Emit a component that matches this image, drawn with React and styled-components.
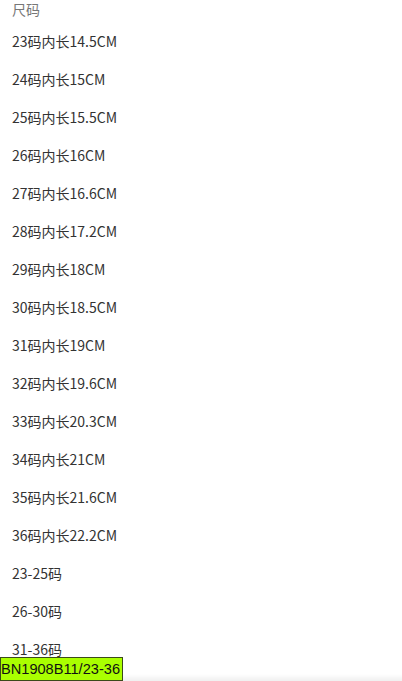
import React from "react";
import styled, { createGlobalStyle } from "styled-components";

const SIZES = [
  "23码内长14.5CM",
  "24码内长15CM",
  "25码内长15.5CM",
  "26码内长16CM",
  "27码内长16.6CM",
  "28码内长17.2CM",
  "29码内长18CM",
  "30码内长18.5CM",
  "31码内长19CM",
  "32码内长19.6CM",
  "33码内长20.3CM",
  "34码内长21CM",
  "35码内长21.6CM",
  "36码内长22.2CM",
  "23-25码",
  "26-30码",
  "31-36码"
];

const GlobalStyle = createGlobalStyle`
  html, body {
    margin: 0;
    padding: 0;
    background: #fff;
    height: 100%;
    overflow: hidden;
  }
  body {
    font-family: "Noto Sans CJK SC", "Noto Sans", sans-serif;
  }
`;

const Page = styled.div`
  padding: 0 12px;
`;

const Title = styled.div`
  font-size: 14px;
  line-height: 18px;
  color: #777;
  margin-bottom: 4px;
`;

const List = styled.ul`
  list-style: none;
  margin: 0;
  padding: 0;
`;

const Item = styled.li`
  font-size: 14px;
  line-height: 38px;
  height: 38px;
  color: #333;
`;

const BottomShade = styled.div`
  position: fixed;
  left: 0;
  right: 0;
  bottom: 0;
  height: 7px;
  background: linear-gradient(to bottom, rgba(0, 0, 0, 0), rgba(0, 0, 0, 0.06));
`;

const Badge = styled.div`
  position: fixed;
  left: 0;
  bottom: 0;
  width: 123px;
  height: 24px;
  box-sizing: border-box;
  background: #aaff00;
  border: 1px solid #3a4a1a;
  font-family: "Liberation Sans", Arial, sans-serif;
  font-size: 14.6px;
  line-height: 22px;
  color: #111;
  white-space: nowrap;
  overflow: hidden;
`;

const App = () => (
  <>
    <GlobalStyle />
    <Page>
      <Title>尺码</Title>
      <List>
        {SIZES.map(s => (
          <Item key={s}>{s}</Item>
        ))}
      </List>
    </Page>
    <BottomShade />
    <Badge>BN1908B11/23-36</Badge>
  </>
);

export default App;
